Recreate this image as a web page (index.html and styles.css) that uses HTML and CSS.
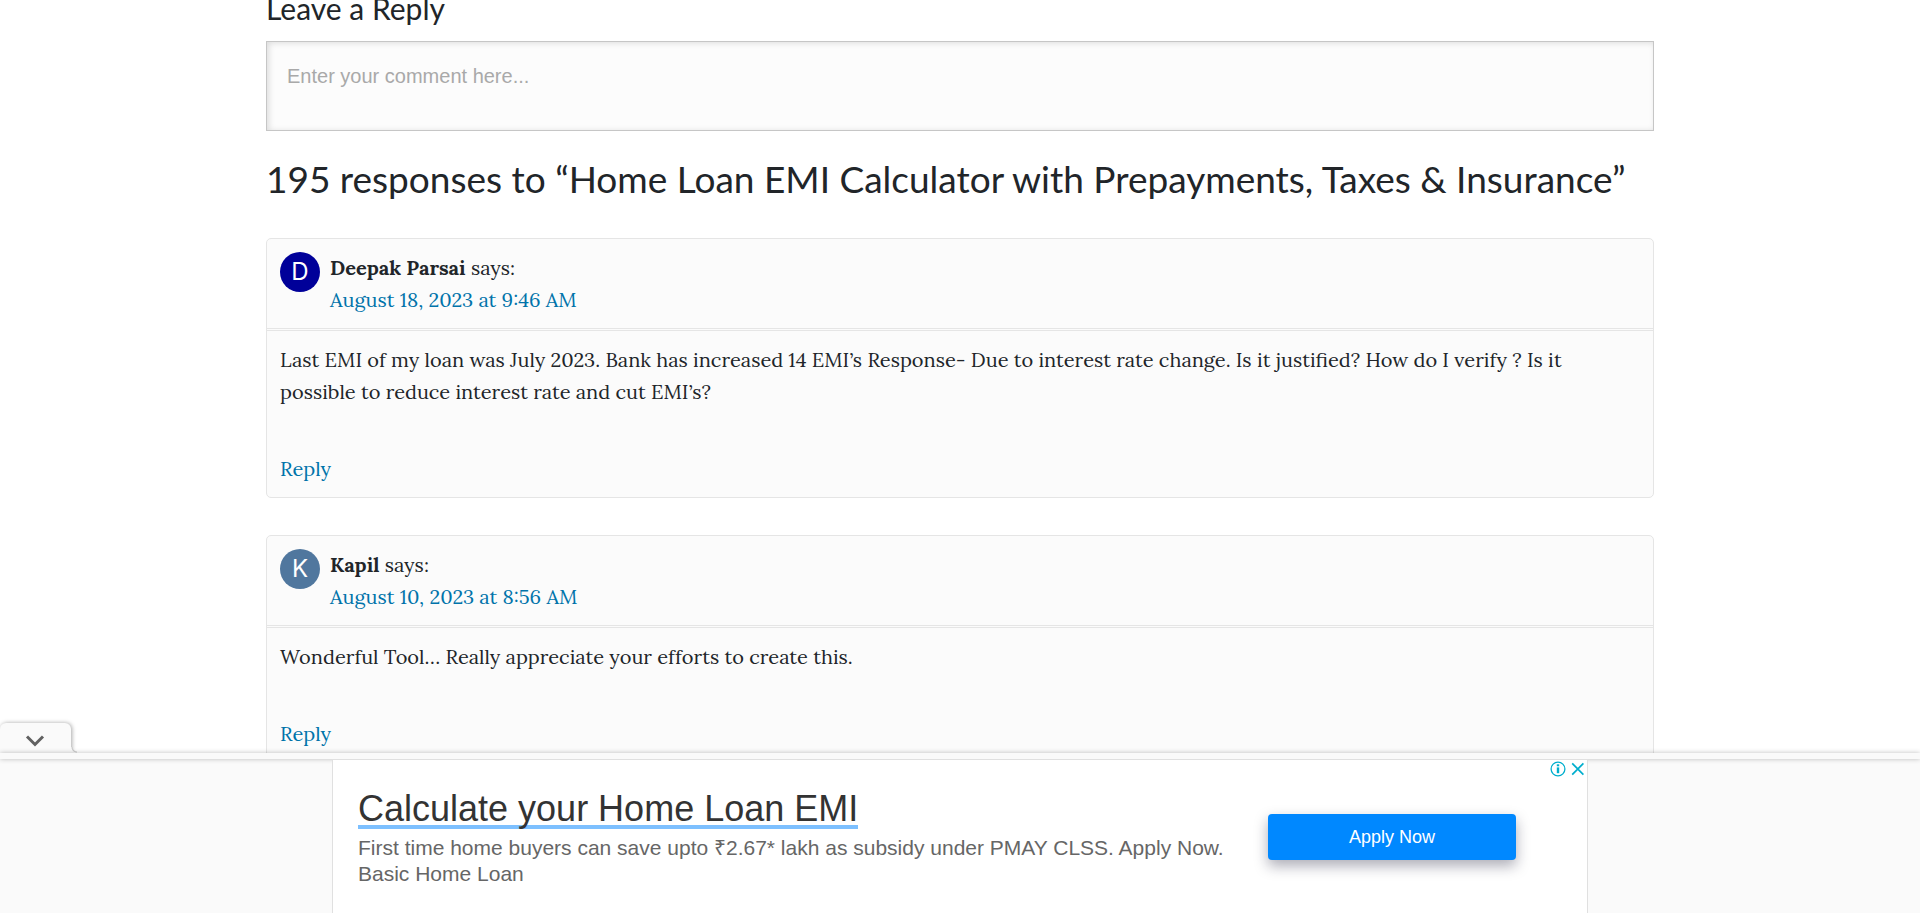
FILE: index.html
```html
<!DOCTYPE html>
<html lang="en">
<head>
<meta charset="utf-8">
<meta name="viewport" content="width=device-width, initial-scale=1">
<title>Home Loan EMI Calculator with Prepayments, Taxes &amp; Insurance</title>
<link rel="stylesheet" href="styles.css">
</head>
<body>
<main class="comments">
  <form class="respond">
    <h3 class="respond-title"><label for="comment">Leave a Reply</label></h3>
    <textarea class="respond-input" id="comment" placeholder="Enter your comment here..."></textarea>
  </form>
  <h2 class="comments-title">195 responses to “Home Loan EMI Calculator with Prepayments, Taxes &amp; Insurance”</h2>
  <article class="comment">
    <header class="comment-head">
      <span class="avatar avatar-navy" aria-hidden="true">D</span>
      <div class="comment-meta">
        <div><b>Deepak Parsai</b> says:</div>
        <a href="#comment-1">August 18, 2023 at 9:46 AM</a>
      </div>
    </header>
    <div class="comment-body">
      <p class="comment-text">Last EMI of my loan was July 2023. Bank has increased 14 EMI’s Response- Due to interest rate change. Is it justified? How do I verify ? Is it possible to reduce interest rate and cut EMI’s?</p>
      <a href="#reply-1">Reply</a>
    </div>
  </article>
  <article class="comment">
    <header class="comment-head">
      <span class="avatar avatar-steel" aria-hidden="true">K</span>
      <div class="comment-meta">
        <div><b>Kapil</b> says:</div>
        <a href="#comment-2">August 10, 2023 at 8:56 AM</a>
      </div>
    </header>
    <div class="comment-body">
      <p class="comment-text">Wonderful Tool… Really appreciate your efforts to create this.</p>
      <a href="#reply-2">Reply</a>
    </div>
  </article>
</main>
<aside class="anchor-ad" aria-label="Advertisement">
  <button class="anchor-toggle" type="button" aria-label="Collapse">
    <svg width="20" height="14" viewBox="0 0 20 14" fill="none" stroke="#616161" stroke-width="3"><path d="M2 2.5l8 8 8-8"/></svg>
  </button>
  <div class="anchor-strip"></div>
  <div class="anchor-stage">
    <div class="ad">
      <div class="ad-copy">
        <a class="ad-title" href="#ad">Calculate your Home Loan EMI</a>
        <p class="ad-text">First time home buyers can save upto ₹2.67* lakh as subsidy under PMAY CLSS. Apply Now. Basic Home Loan</p>
      </div>
      <button class="ad-button" type="button">Apply Now</button>
      <div class="ad-choices">
        <button class="ad-icon" type="button" aria-label="About this ad">
          <svg width="16" height="16" viewBox="0 0 16 16" fill="none" stroke="#00aecd"><circle cx="8" cy="8" r="6.9" stroke-width="1.3"/><path d="M8 6.4v5.8" stroke-width="2.4"/><path d="M8 3.3v2" stroke-width="2.4"/></svg>
        </button>
        <button class="ad-icon" type="button" aria-label="Close ad">
          <svg width="16" height="16" viewBox="0 0 16 16" fill="none" stroke="#00aecd" stroke-width="1.7"><path d="M2.2 2.4l11.2 11.2M13.4 2.4L2.2 13.6"/></svg>
        </button>
      </div>
    </div>
  </div>
</aside>
</body>
</html>
```
FILE: styles.css
```css
* { box-sizing: border-box; }
body {
  margin: 0;
  height: 100vh;
  overflow: hidden;
  background: #fff;
  color: #212529;
  font: 20px/32px Lora, "Liberation Serif", serif;
}
a { color: #0073aa; text-decoration: none; }
button { border: 0; padding: 0; background: none; cursor: pointer; }
.comments { max-width: 1420px; margin: 0 auto; padding: 0 16px; }
.respond-title {
  margin: -10px 0 15px;
  font: 400 30px/36px Lato, sans-serif;
}
.respond-input {
  display: block;
  width: 100%;
  height: 90px;
  padding: 20px;
  resize: none;
  border: 1px solid #c6c6c6;
  border-radius: 0;
  background: #fcfcfc;
  box-shadow: inset 2px 1px 6px rgba(0, 0, 0, .13);
  font: 20px/28px "Liberation Sans", Arial, sans-serif;
}
.respond-input::placeholder { color: #a9a9a9; }
.comments-title {
  margin: 24px 0 35px;
  font: 400 37px/48px Lato, sans-serif;
}
.comment {
  margin-bottom: 37px;
  border: 1px solid #e5e5e5;
  border-radius: 5px;
  background: #fbfbfb;
}
.comment-head {
  display: flex;
  gap: 10px;
  padding: 13px 13px 12px;
  border-bottom: 3px double #e5e5e5;
}
.avatar {
  width: 40px;
  height: 40px;
  border-radius: 50%;
  color: #fff;
  font: 400 24px/40px Inter, sans-serif;
  text-align: center;
}
.avatar-navy { background: #000099; }
.avatar-steel { background: #50779e; }
.comment-body { padding: 13px 13px 12px; }
.comment-text { margin: 0 0 45px; }
.anchor-ad {
  position: fixed;
  right: 0;
  bottom: 0;
  left: 0;
  font-family: "Liberation Sans", Arial, sans-serif;
}
.anchor-toggle {
  position: absolute;
  bottom: 100%;
  left: 0;
  width: 71px;
  height: 30px;
  padding: 5px 2px 0 0;
  border-radius: 6px 6px 0 0;
  background: #fafafa;
  box-shadow: 1px 0 4px rgba(0, 0, 0, .35);
}
.anchor-toggle::after {
  content: "";
  position: absolute;
  bottom: 0;
  left: 100%;
  width: 6px;
  height: 6px;
  background: radial-gradient(circle at 100% 0, transparent 4px, #c8c8c8 5px, #fafafa 6px);
}
.anchor-strip {
  position: relative;
  height: 6px;
  background: #fafafa;
  box-shadow: 0 0 5px rgba(0, 0, 0, .25);
}
.anchor-stage { background: #fafafa; }
.ad {
  position: relative;
  display: flex;
  justify-content: space-between;
  align-items: flex-start;
  max-width: 1256px;
  height: 154px;
  margin: 0 auto;
  padding: 33px 71px 0 25px;
  border: 1px solid #e0e0e0;
  border-bottom: 0;
  background: #fff;
}
.ad-copy { flex: 0 1 870px; }
.ad-title {
  display: inline-block;
  border-bottom: 4px solid #7dc0ff;
  color: #333;
  font-size: 36px;
  line-height: 32px;
}
.ad-text { margin: 5px 0 0; color: #666; font-size: 21px; line-height: 26px; }
.ad-button {
  width: 248px;
  height: 46px;
  margin-top: 21px;
  border-radius: 4px;
  background: #08f;
  box-shadow: 0 6px 14px rgba(20, 20, 50, .35);
  color: #fff;
  font: 18px/46px "Liberation Sans", Arial, sans-serif;
}
.ad-choices { position: absolute; top: 1px; right: 1px; display: flex; gap: 4px; }
.ad-icon { width: 16px; height: 16px; }
.ad-icon svg, .anchor-toggle svg { display: block; }
.anchor-toggle svg { margin: 0 auto; }
```
